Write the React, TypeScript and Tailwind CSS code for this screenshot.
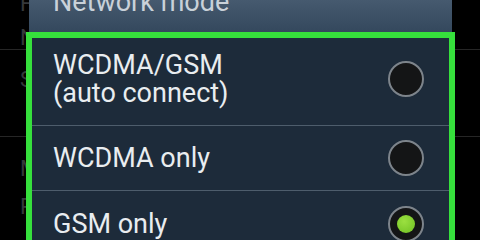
import React from "react";

const Radio = ({ checked }: { checked?: boolean }) => (
  <div className="w-[36px] h-[36px] rounded-full border-2 border-[#7d848b] bg-[#141516] flex items-center justify-center shrink-0">
    {checked && (
      <div className="w-[18px] h-[18px] rounded-full bg-[radial-gradient(circle_at_40%_35%,#9be040,#6fbf22)]" />
    )}
  </div>
);

const options = [
  { label: ["WCDMA/GSM", "(auto connect)"], h: "h-[88px] pb-[5px]" },
  { label: ["WCDMA only"], h: "h-[65px] pb-[1px]" },
  { label: ["GSM only"], h: "h-[65px]", checked: true },
];

export default function App() {
  return (
    <div className="relative w-[480px] h-[240px] overflow-hidden bg-black font-['Roboto',sans-serif]">
      {/* settings list behind the dialog */}
      <div className="flex flex-col text-[22px] leading-[24px] text-[#35383b]">
        <div className="h-[58px] border-b border-[#262626] pl-[20px] flex flex-col -mt-[8px]">
          <span>Flight mode</span>
          <span className="mt-[10px]">Network mode</span>
        </div>
        <div className="h-[87px] border-b border-[#262626] pl-[20px] pt-[18px]">
          <span>Settings</span>
        </div>
        <div className="pl-[20px] pt-[20px] flex flex-col">
          <span>Mobile networks</span>
          <span className="mt-[14px]">Roaming</span>
        </div>
      </div>

      {/* dialog */}
      <div className="absolute left-[26px] top-[-22px] w-[429px] flex flex-col">
        <div className="mx-[3px] h-[54px] bg-gradient-to-b from-[#52667b] to-[#34485d] pl-[24px] pt-[9px] text-[27px] leading-[30px] text-[#c9d1d9]">
          Network mode
        </div>
        <div className="border-[6px] border-[#36e03c] bg-[#1d2b3a]">
          {options.map((o, i) => (
            <div
              key={i}
              className={`${o.h} flex items-center justify-between pl-[21px] pr-[25px] ${i < options.length - 1 ? "border-b border-[#4e5d6c]" : ""}`}
            >
              <div className="flex flex-col text-[27px] leading-[28px] text-[#e9edf0]">
                {o.label.map((l) => (
                  <span key={l}>{l}</span>
                ))}
              </div>
              <Radio checked={o.checked} />
            </div>
          ))}
        </div>
      </div>
    </div>
  );
}
